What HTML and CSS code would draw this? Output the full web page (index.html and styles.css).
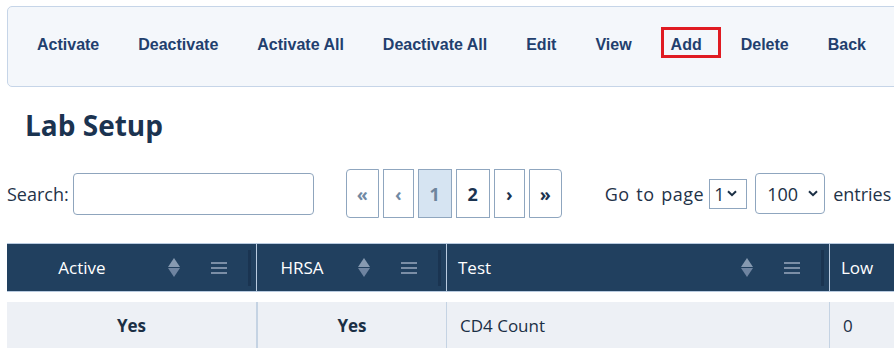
FILE: index.html
```html
<!DOCTYPE html>
<html lang="en">
  <head>
    <meta charset="UTF-8" />
    <meta name="viewport" content="width=device-width, initial-scale=1.0" />
    <title>Lab Setup</title>
    <link rel="stylesheet" href="styles.css">
  </head>
  <body>
    <div class="page">
      <div class="toolbar">
        <button class="tool-btn">Activate</button>
        <button class="tool-btn">Deactivate</button>
        <button class="tool-btn">Activate All</button>
        <button class="tool-btn">Deactivate All</button>
        <button class="tool-btn">Edit</button>
        <button class="tool-btn">View</button>
        <button class="tool-btn focused">Add</button>
        <button class="tool-btn">Delete</button>
        <button class="tool-btn">Back</button>
      </div>

      <h1>Lab Setup</h1>

      <div class="controls">
        <label class="search">Search:<input type="text" /></label>

        <div class="pager">
          <span class="pg first muted">&laquo;</span>
          <span class="pg narrow muted">&lsaquo;</span>
          <span class="pg current">1</span>
          <span class="pg">2</span>
          <span class="pg narrow">&rsaquo;</span>
          <span class="pg last">&raquo;</span>
        </div>

        <div class="goto">
          <span class="goto-label">Go to page</span>
          <span class="fake-select small">1<svg width="10" height="7" viewBox="0 0 10 7"><path d="M1 1.2 5 5.2 9 1.2" fill="none" stroke="#1b2f45" stroke-width="2"/></svg></span>
          <span class="fake-select big">100<svg width="10" height="7" viewBox="0 0 10 7"><path d="M1 1.2 5 5.2 9 1.2" fill="none" stroke="#1b2f45" stroke-width="2"/></svg></span>
          entries
        </div>
      </div>

      <div class="grid">
        <div class="th center">
          <span class="label">Active</span>
          <span class="sort"></span>
          <span class="menu"><i></i><i></i><i></i></span>
          <span class="handle"></span>
        </div>
        <div class="th center">
          <span class="label">HRSA</span>
          <span class="sort"></span>
          <span class="menu"><i></i><i></i><i></i></span>
          <span class="handle"></span>
        </div>
        <div class="th">
          <span class="label">Test</span>
          <span class="sort"></span>
          <span class="menu"><i></i><i></i><i></i></span>
          <span class="handle"></span>
        </div>
        <div class="th">
          <span class="label">Low</span>
        </div>

        <div class="gap"></div>

        <div class="td center bold">Yes</div>
        <div class="td center bold">Yes</div>
        <div class="td">CD4 Count</div>
        <div class="td">0</div>
      </div>
    </div>
  </body>
</html>
```

FILE: styles.css
```css
body {
  margin: 0;
  font-family: "Open Sans", "Noto Sans", sans-serif;
  color: #1b3350;
  background: #fff;
  overflow: hidden;
}
.page {
  padding: 6px 0 0 7px;
  width: 1100px;
}

/* top action bar */
.toolbar {
  display: flex;
  align-items: center;
  gap: 19px;
  padding: 27px 19px 30px 19px;
  background: #f4f7fb;
  border: 1px solid #c6d5e8;
  border-radius: 5px;
}
.tool-btn {
  position: relative;
  font-family: "Liberation Sans", Arial, sans-serif;
  font-size: 16px;
  font-weight: bold;
  line-height: 18px;
  color: #223f6e;
  background: none;
  border: none;
  padding: 2px 10px;
  cursor: pointer;
}
.tool-btn.focused::after {
  content: "";
  position: absolute;
  left: 0;
  top: -7px;
  width: 54px;
  height: 25px;
  border: 3px solid #e01b22;
}

h1 {
  margin: 20px 0 0 18px;
  font-size: 28px;
  line-height: 36px;
  font-weight: 700;
  color: #1b3350;
}

/* search / paging row */
.controls {
  display: flex;
  align-items: center;
  margin-top: 26px;
  font-size: 18px;
  color: #1f3349;
}
.search {
  display: flex;
  align-items: center;
  gap: 4px;
}
.search input {
  width: 237px;
  height: 40px;
  border: 1px solid #8fa5bd;
  border-radius: 4px;
  padding: 0 1px;
  margin: 0;
}
.pager {
  display: flex;
  gap: 4px;
  margin-left: 32px;
}
.pg {
  display: flex;
  align-items: center;
  justify-content: center;
  width: 32px;
  height: 47px;
  border: 1px solid #8fa6bf;
  font-weight: 700;
  font-size: 18px;
  color: #1b3350;
}
.pg.first,
.pg.last {
  width: 31px;
}
.pg.narrow {
  width: 29px;
}
.pg.first {
  border-radius: 4px 0 0 4px;
}
.pg.last {
  border-radius: 0 4px 4px 0;
}
.pg.current {
  background: #d6e4f2;
  color: #6d849d;
}
.pg.muted {
  color: #7189a3;
}
.goto {
  display: flex;
  align-items: center;
  margin-left: 43px;
  white-space: nowrap;
}
.goto-label {
  letter-spacing: 0.5px;
  word-spacing: 1.5px;
}
.fake-select {
  display: flex;
  align-items: center;
  border: 1px solid #8fa6bf;
  color: #1b2f45;
}
.fake-select.small {
  margin-left: 5px;
  height: 28px;
  width: 32px;
  padding-left: 4px;
  gap: 3px;
}
.fake-select.big {
  margin: 0 8px 0 8px;
  height: 39px;
  width: 57px;
  padding-left: 11px;
  gap: 10px;
  border-radius: 4px;
}

/* table */
.grid {
  display: grid;
  grid-template-columns: 250px 190px 383px 200px;
  margin-top: 25px;
}
.th {
  display: flex;
  align-items: center;
  height: 47px;
  background: #21405f;
  color: #fff;
  font-size: 17px;
  border-top: 1px solid #b9cbe0;
  border-bottom: 1px solid #b9cbe0;
  border-right: 1px solid #b9cbe0;
  padding: 0 5px 0 11px;
}
.th.center .label {
  text-align: center;
  margin-left: -11px;
}
.th .label {
  flex: 1;
}
.sort {
  position: relative;
  width: 12px;
  height: 19px;
  margin: 0 0 0 11px;
}
.sort::before,
.sort::after {
  content: "";
  position: absolute;
  left: 0;
  border-left: 6px solid transparent;
  border-right: 6px solid transparent;
}
.sort::before {
  top: 0;
  border-bottom: 9px solid #8699b0;
}
.sort::after {
  bottom: 0;
  border-top: 9px solid #6f84a0;
}
.menu {
  display: flex;
  flex-direction: column;
  gap: 3px;
  width: 16px;
  margin-left: 31px;
}
.menu i {
  display: block;
  height: 2px;
  background: #7b8ea6;
}
.handle {
  width: 3px;
  height: 36px;
  background: #1a3451;
  margin-left: 21px;
}
.gap {
  grid-column: 1 / -1;
  height: 10px;
}
.td {
  height: 46px;
  display: flex;
  align-items: center;
  padding-left: 13px;
  background: #edf0f5;
  border-right: 1px solid #c5d3e3;
  font-size: 17px;
  color: #1b2f45;
}
.td:nth-child(7) {
  border-left: 1px solid #c5d3e3;
}
.td.center {
  justify-content: center;
  padding-left: 0;
}
.td.bold {
  font-weight: 700;
}
```
